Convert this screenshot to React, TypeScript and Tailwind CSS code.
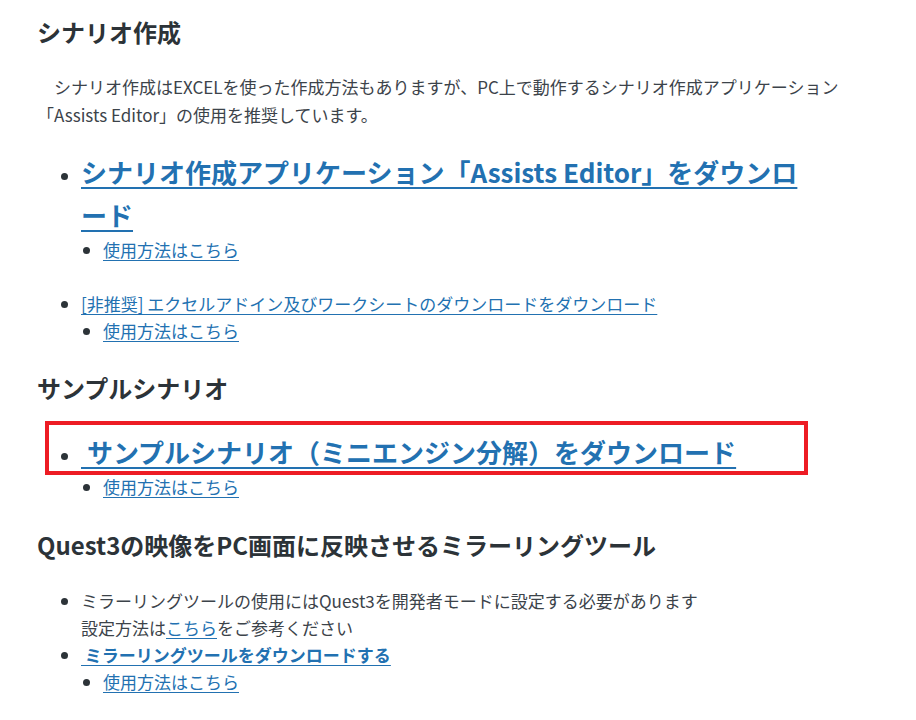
import React from "react";

const FONT = "font-['Noto_Sans_CJK_JP','Noto_Sans',sans-serif]";

function SubLink() {
  return (
    <ul className="list-disc pl-[22px] marker:text-[#2c3338]">
      <li>
        <a href="#" className="text-[#2271b1] underline underline-offset-[3px]">
          使用方法はこちら
        </a>
      </li>
    </ul>
  );
}

export default function App() {
  return (
    <div
      className={`${FONT} min-h-[720px] bg-white text-[17px] leading-[27px] text-[#3c434a]`}
    >
      <div className="w-[845px] pl-[37px] pt-[16px]">
        <h2 className="text-[24px] font-bold leading-[32px] text-[#2c3338]">
          シナリオ作成
        </h2>

        <p className="mt-[25px] leading-[28px]">
          {"\u3000"}シナリオ作成はEXCELを使った作成方法もありますが、PC上で動作するシナリオ作成アプリケーション「Assists
          Editor」の使用を推奨しています。
        </p>

        <ul className="mt-[21px] list-disc pl-[44px] marker:text-[#2c3338]">
          <li className="pr-[35px]">
            <a
              href="#"
              className="text-[26px] font-bold leading-[43px] text-[#2271b1] underline underline-offset-[4px]"
            >
              シナリオ作成アプリケーション「Assists Editor」をダウンロード
            </a>
            <SubLink />
          </li>
          <li className="mt-[27px]">
            <a href="#" className="text-[#2271b1] underline underline-offset-[3px]">
              [非推奨] エクセルアドイン及びワークシートのダウンロードをダウンロード
            </a>
            <SubLink />
          </li>
        </ul>

        <h2 className="mt-[28px] text-[24px] font-bold leading-[32px] text-[#2c3338]">
          サンプルシナリオ
        </h2>

        <ul className="mt-[26px] list-disc pl-[44px] marker:text-[#2c3338]">
          <li className="relative">
            <div className="pointer-events-none absolute left-[-36px] top-[-9px] h-[54px] w-[763px] border-4 border-[#ed1c24]" />
            <a
              href="#"
              className="text-[26px] font-bold leading-[43px] text-[#2271b1] underline underline-offset-[4px]"
            >
              &nbsp;サンプルシナリオ（ミニエンジン分解）をダウンロード
            </a>
            <SubLink />
          </li>
        </ul>

        <h2 className="mt-[29px] text-[24px] font-bold leading-[32px] text-[#2c3338]">
          Quest3の映像をPC画面に反映させるミラーリングツール
        </h2>

        <ul className="mt-[26px] list-disc pl-[44px] marker:text-[#2c3338]">
          <li>
            ミラーリングツールの使用にはQuest3を開発者モードに設定する必要があります
            <br />
            設定方法は
            <a href="#" className="text-[#2271b1] underline underline-offset-[3px]">
              こちら
            </a>
            をご参考ください
          </li>
          <li>
            <a
              href="#"
              className="font-bold text-[#2271b1] underline underline-offset-[3px]"
            >
              &nbsp;ミラーリングツールをダウンロードする
            </a>
            <SubLink />
          </li>
        </ul>
      </div>
    </div>
  );
}
